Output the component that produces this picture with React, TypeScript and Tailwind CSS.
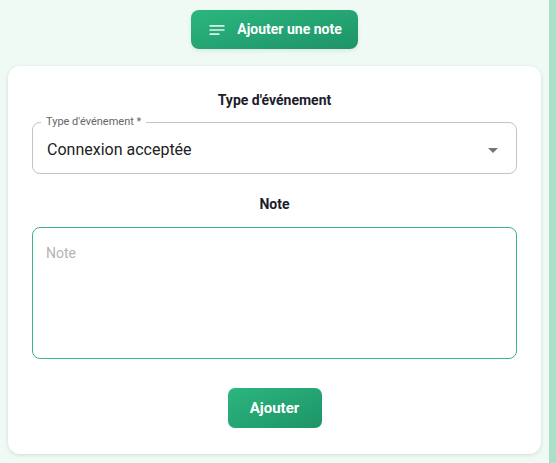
import React from "react";

export default function App() {
  return (
    <div className="flex h-[463px] w-[556px] bg-[#effaf5]" style={{ fontFamily: "Roboto, 'Noto Sans', sans-serif" }}>
      <div className="flex flex-1 flex-col items-center px-2 pt-[10px]">
        <button className="flex h-[39px] w-[167px] items-center justify-center gap-[10px] rounded-[8px] bg-gradient-to-br from-[#2bb67f] to-[#1e9467] text-[14px] font-bold text-white shadow-[0_2px_4px_rgba(0,0,0,0.08)]">
          <svg viewBox="0 0 24 24" width="20" height="20" fill="#d9f5ea">
            <path d="M3 18h12v-2H3v2zM3 6v2h18V6H3zm0 7h18v-2H3v2z" />
          </svg>
          <span>Ajouter une note</span>
        </button>
        <div className="mt-[17px] flex w-full flex-col items-stretch rounded-[12px] bg-white px-6 pb-[26px] pt-[26px] shadow-[0_1px_4px_rgba(0,0,0,0.12)]">
          <h2 className="text-center text-[14px] font-bold leading-[16px] text-[#1d1d2c]">Type d'événement</h2>
          <div className="relative mt-[14px] flex h-[52px] items-center rounded-[8px] border border-[#c4c4c4] pl-[14px] pr-[14px] pt-[3px]">
            <span className="absolute left-[8px] top-[-8px] bg-white px-[5px] text-[11px] leading-[14px] text-[#666]">Type d'événement *</span>
            <span className="flex-1 text-[16px] text-[#222]">Connexion acceptée</span>
            <svg viewBox="0 0 24 24" width="24" height="24" fill="#757575" className="mr-[-3px]">
              <path d="M7 10l5 5 5-5z" />
            </svg>
          </div>
          <h2 className="mt-[22px] text-center text-[14px] font-bold leading-[16px] text-[#1d1d2c]">Note</h2>
          <div className="mt-[15px] h-[132px] rounded-[8px] border border-[#3db58a] px-[13px] pt-[15px] text-[14px] text-[#b4b4b4]">
            Note
          </div>
          <div className="mt-[29px] flex justify-center">
            <button className="flex h-[40px] w-[94px] items-center justify-center rounded-[7px] bg-gradient-to-br from-[#2bb67f] to-[#1e9467] text-[15px] font-bold text-white">
              Ajouter
            </button>
          </div>
        </div>
      </div>
      <div className="w-[7px] bg-[#aadfca]" />
    </div>
  );
}
